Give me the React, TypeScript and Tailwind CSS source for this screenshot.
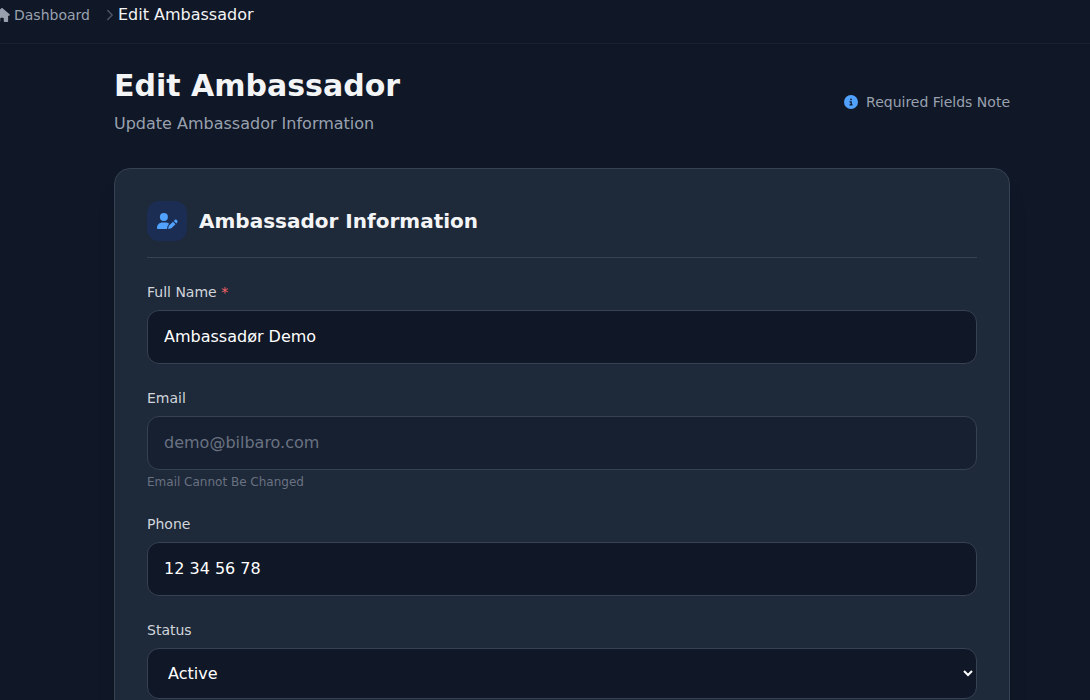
import type { ReactNode } from 'react';
import { FaCircleInfo, FaHouse } from 'react-icons/fa6';

const inputClass =
  'block w-full px-4 py-3.5 leading-6 rounded-xl border border-gray-700 bg-[#101726] text-white outline-none disabled:bg-[#172030] disabled:text-gray-500';

function ChevronIcon({ className }: { className: string }) {
  return (
    <svg viewBox="0 0 8 12" fill="none" className={className}>
      <path
        d="M1.7 1.5 6.2 6 1.7 10.5"
        stroke="currentColor"
        strokeWidth="1.5"
        strokeLinecap="round"
        strokeLinejoin="round"
      />
    </svg>
  );
}

function UserPenIcon({ className }: { className: string }) {
  return (
    <svg viewBox="0 0 20 16" fill="currentColor" className={className}>
      <circle cx="6.9" cy="4.1" r="4" />
      <path d="M0 14.9C0 11.8 2.5 9.6 5.5 9.6h2.9c1.5 0 2.8.4 3.8 1.2l-1 1.1c-.3.3-.5.7-.6 1.1L10 15.9H1c-.6 0-1-.4-1-1z" />
      {/* pen body and its eraser end */}
      <path d="M11.1 16l.7-3.2 4.2-4.1 2.5 2.5-4.2 4.1z" />
      <path d="M16.8 7.9l.7-.7a1.75 1.75 0 0 1 2.5 2.5l-.7.7z" />
    </svg>
  );
}

interface FieldProps {
  label: string;
  required?: boolean;
  hint?: string;
  children: ReactNode;
}

function Field({ label, required, hint, children }: FieldProps) {
  return (
    <div>
      <label className="block mb-2 text-sm font-medium text-gray-300">
        {label} {required && <span className="text-red-400">*</span>}
      </label>
      {children}
      {hint && <p className="mt-1 text-xs text-gray-500">{hint}</p>}
    </div>
  );
}

export default function App() {
  return (
    <div className="h-screen overflow-hidden bg-[#101726] font-['DejaVu_Sans',sans-serif]">
      {/* Breadcrumb */}
      <nav className="flex h-11 items-start border-b border-gray-800/60 pt-[3px]">
        <a className="-ml-1.5 flex h-6 items-center text-sm text-gray-400">
          <FaHouse className="mr-1 h-3.5 w-4 shrink-0" />
          Dashboard
        </a>
        <ChevronIcon className="mr-1 ml-4 mt-1.5 h-3 w-2 text-gray-600" />
        <span className="leading-6 text-gray-100">Edit Ambassador</span>
      </nav>

      <main className="mt-6 mr-20 ml-[114px]">
        <header className="mb-8 flex items-center justify-between">
          <div>
            <h1 className="text-3xl font-bold text-gray-100">Edit Ambassador</h1>
            <p className="mt-2 text-gray-400">Update Ambassador Information</p>
          </div>
          <div className="flex items-center text-sm text-gray-400">
            <FaCircleInfo className="mr-2 h-3.5 w-3.5 text-blue-400" />
            Required Fields Note
          </div>
        </header>

        <section className="rounded-2xl border border-gray-700 bg-gray-800 p-8 shadow-xl">
          <div className="mb-6 flex items-center border-b border-gray-700 pb-4">
            <div className="mr-3 flex h-10 w-10 items-center justify-center rounded-xl bg-[#1c2d54]">
              <UserPenIcon className="h-4 w-5 overflow-visible text-blue-400" />
            </div>
            <h2 className="text-xl font-bold text-gray-100">Ambassador Information</h2>
          </div>

          <form className="space-y-6">
            <Field label="Full Name" required>
              <input className={inputClass} type="text" defaultValue="Ambassadør Demo" />
            </Field>
            <Field label="Email" hint="Email Cannot Be Changed">
              <input className={inputClass} type="email" defaultValue="demo@bilbaro.com" disabled />
            </Field>
            <Field label="Phone">
              <input className={inputClass} type="tel" defaultValue="12 34 56 78" />
            </Field>
            <Field label="Status">
              <select className={inputClass} defaultValue="active">
                <option value="active">Active</option>
                <option value="inactive">Inactive</option>
              </select>
            </Field>
          </form>
        </section>
      </main>
    </div>
  );
}
